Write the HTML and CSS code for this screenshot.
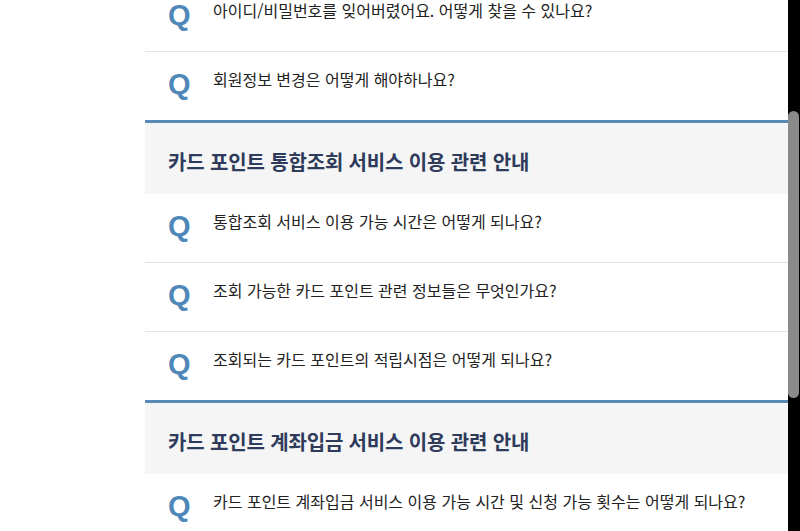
FILE: index.html
```html
<!DOCTYPE html>
<html lang="ko">
<head>
<meta charset="utf-8">
<title>FAQ</title>
<link rel="stylesheet" href="styles.css">
</head>
<body>
<div class="screen">
  <main class="page">
    <div class="faq">
      <ul class="qlist first">
        <li class="qrow"><span class="q">Q</span><span class="qtext">아이디/비밀번호를 잊어버렸어요. 어떻게 찾을 수 있나요?</span></li>
        <li class="qrow"><span class="q">Q</span><span class="qtext">회원정보 변경은 어떻게 해야하나요?</span></li>
      </ul>
      <section class="group">
        <h2 class="ghead">카드 포인트 통합조회 서비스 이용 관련 안내</h2>
        <ul class="qlist">
          <li class="qrow"><span class="q">Q</span><span class="qtext">통합조회 서비스 이용 가능 시간은 어떻게 되나요?</span></li>
          <li class="qrow"><span class="q">Q</span><span class="qtext">조회 가능한 카드 포인트 관련 정보들은 무엇인가요?</span></li>
          <li class="qrow"><span class="q">Q</span><span class="qtext">조회되는 카드 포인트의 적립시점은 어떻게 되나요?</span></li>
        </ul>
      </section>
      <section class="group">
        <h2 class="ghead">카드 포인트 계좌입금 서비스 이용 관련 안내</h2>
        <ul class="qlist">
          <li class="qrow"><span class="q">Q</span><span class="qtext">카드 포인트 계좌입금 서비스 이용 가능 시간 및 신청 가능 횟수는 어떻게 되나요?</span></li>
        </ul>
      </section>
    </div>
  </main>
  <div class="rail"><div class="thumb"></div></div>
</div>
</body>
</html>
```

FILE: styles.css
```css
html, body {
  margin: 0;
  padding: 0;
  height: 100%;
  overflow: hidden;
  background: #ffffff;
}
body {
  font-family: "Noto Sans CJK KR", "Noto Sans", sans-serif;
}
.screen {
  display: flex;
  height: 531px;
  overflow: hidden;
}
.page {
  flex: 1;
  padding-left: 145px;
  overflow: hidden;
  background: #ffffff;
}
.faq {
  margin-top: -17px;
}
.qlist {
  list-style: none;
  margin: 0;
  padding: 0;
}
.qrow {
  display: flex;
  align-items: center;
  height: 68px;
  padding-left: 23px;
  border-top: 1px solid #e3e3e3;
}
.qrow:first-child {
  border-top: none;
}
.q {
  width: 45px;
  flex: none;
  font-family: "Liberation Sans", Arial, sans-serif;
  font-weight: 700;
  font-size: 29px;
  line-height: 1;
  color: #4f87b8;
  position: relative;
  top: -2px;
}
.qtext {
  font-size: 16px;
  letter-spacing: 0;
  color: #222222;
  line-height: 1;
  position: relative;
  top: -7px;
}
.group {
  border-top: 3px solid #5889b6;
}
.ghead {
  margin: 0;
  height: 71px;
  box-sizing: border-box;
  padding: 5px 0 0 23px;
  display: flex;
  align-items: center;
  background: #f5f5f5;
  font-size: 20px;
  font-weight: 700;
  letter-spacing: -0.15px;
  color: #2e3b5a;
}
.rail {
  width: 12px;
  flex: none;
  background: #000000;
  position: relative;
}
.thumb {
  position: absolute;
  left: 0;
  right: 1px;
  top: 111px;
  height: 287px;
  background: #8a8a8a;
  border-radius: 6px;
}
```
